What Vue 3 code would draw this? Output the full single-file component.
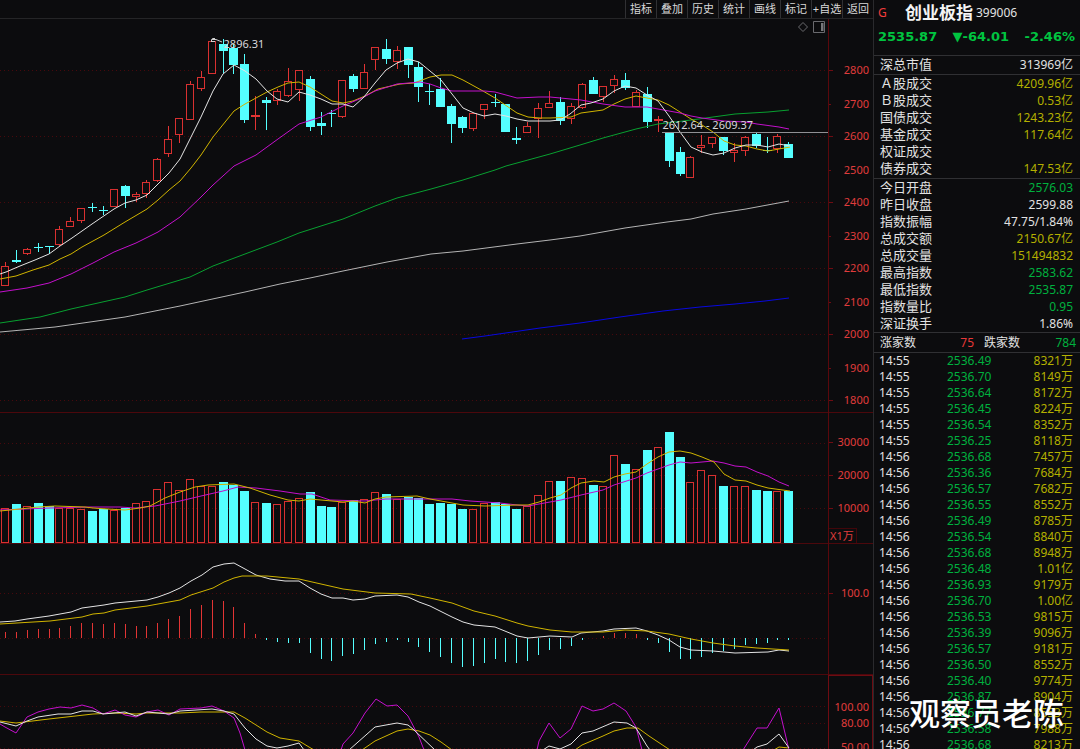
<script setup>
const tools = ['指标', '叠加', '历史', '统计', '画线', '标记', '+自选', '返回']

// kind, high, body top, body bottom, low
const candles = [
  ['r', 262, 266, 286, 286], ['c', 250, 260, 262, 263], ['r', 248, 249, 254, 255], ['c', 243, 247, 248, 252],
  ['c', 246, 246, 247, 254], ['r', 226, 229, 245, 246], ['r', 217, 221, 227, 227], ['r', 208, 208, 221, 223],
  ['c', 203, 207, 208, 212], ['c', 206, 210, 211, 215], ['r', 189, 189, 207, 207], ['c', 185, 186, 196, 208],
  ['r', 192, 194, 197, 202], ['r', 180, 182, 194, 198], ['r', 158, 159, 181, 182], ['r', 126, 139, 154, 157],
  ['r', 118, 118, 135, 143], ['r', 81, 84, 120, 120], ['r', 71, 77, 89, 91], ['r', 41, 41, 74, 74],
  ['c', 39, 44, 51, 73], ['c', 44, 48, 65, 74], ['c', 54, 64, 120, 123], ['r', 96, 115, 117, 130],
  ['c', 97, 100, 103, 130], ['r', 89, 91, 101, 105], ['r', 68, 81, 96, 97], ['r', 70, 70, 90, 101],
  ['c', 76, 79, 127, 131], ['c', 112, 123, 126, 135], ['c', 110, 113, 114, 127], ['r', 80, 80, 117, 118],
  ['c', 74, 76, 89, 92], ['r', 64, 72, 89, 89], ['r', 47, 47, 60, 70], ['c', 39, 49, 59, 64],
  ['r', 46, 50, 62, 69], ['c', 47, 47, 65, 78], ['c', 62, 67, 87, 102], ['c', 84, 91, 92, 105],
  ['c', 78, 89, 107, 107], ['c', 104, 106, 124, 143], ['c', 116, 117, 128, 133], ['r', 113, 113, 129, 131],
  ['r', 104, 104, 110, 119], ['c', 94, 102, 103, 107], ['c', 104, 104, 132, 132], ['c', 127, 138, 140, 144],
  ['r', 122, 126, 133, 133], ['r', 103, 108, 119, 138], ['r', 91, 103, 108, 108], ['c', 97, 102, 121, 125],
  ['r', 103, 106, 119, 124], ['r', 83, 84, 108, 109], ['c', 77, 80, 94, 94], ['r', 86, 86, 97, 102],
  ['r', 75, 79, 86, 93], ['c', 73, 80, 88, 90], ['r', 90, 92, 107, 107], ['c', 87, 94, 122, 128],
  ['r', 116, 119, 121, 132], ['c', 132, 132, 161, 167], ['c', 147, 152, 174, 176], ['r', 156, 157, 178, 178],
  ['r', 135, 145, 148, 153], ['r', 137, 137, 144, 148], ['c', 137, 137, 151, 155], ['r', 143, 150, 153, 162],
  ['r', 136, 137, 151, 156], ['c', 133, 134, 146, 148], ['c', 137, 150, 151, 153], ['r', 134, 136, 149, 153],
  ['c', 142, 144, 158, 158]
].map(([kind, hi, top, bot, lo], i) => ({ kind, hi, top, bot, lo, x: Math.round(i * 10.88) + 5 }))

const volumes = [
  508, 504, 506, 503, 506, 508, 508, 509, 511, 509, 510, 508, 503, 501, 489, 482, 490, 479, 486, 486,
  482, 485, 491, 502, 503, 504, 501, 498, 492, 506, 507, 502, 500, 499, 492, 494, 499, 497, 498, 504,
  503, 504, 509, 509, 503, 502, 504, 509, 506, 495, 481, 481, 477, 478, 485, 486, 455, 464, 469, 450,
  447, 432, 457, 482, 470, 475, 486, 486, 486, 490, 491, 491, 491
]

const macd = [
  632, 632, 630, 629, 629, 628, 626, 623, 623, 624, 623, 624, 626, 626, 623, 619, 616, 609, 605, 600,
  601, 607, 623, 634, 640, 642, 643, 643, 653, 659, 661, 656, 654, 650, 644, 642, 640, 642, 647, 652,
  657, 663, 667, 666, 663, 659, 662, 663, 661, 655, 650, 649, 646, 640, 638, 636, 633, 633, 634, 640,
  643, 652, 659, 659, 657, 653, 651, 649, 645, 644, 643, 640, 640
]

const priceLines = [
  { cls: 'blue', points: '462,339 485,336 540,328 580,323 620,317 663,311 700,307 735,304 765,301 789,298' },
  { cls: 'grey', points: '0,332 55,327 125,317 180,306 245,292 280,284 310,278 343,271 387,262 431,254 463,251 517,244 550,240 580,236 625,228 667,222 691,219 713,214 746,209 789,201' },
  { cls: 'green', points: '0,323 40,317 71,309 125,297 147,290 190,277 213,266 245,254 277,242 299,233 343,219 375,206 397,198 431,189 463,180 495,170 506,166 517,163 550,154 580,145 603,138 636,129 658,124 691,120 713,117 735,114 768,112 789,110' },
  { cls: 'gold', points: '0,279 16,276 33,270 49,265 60,259 71,254 82,247 104,235 125,222 147,209 158,200 169,190 180,181 191,168 201,155 213,137 234,111 245,104 256,98 267,92 278,87 288,83 299,82 310,87 321,94 332,101 343,103 353,101 365,96 378,89 400,84 414,83 430,77 441,75 452,75 463,80 483,91 495,98 517,113 528,117 540,118 550,118 571,117 581,113 603,110 614,104 625,99 636,96 647,98 658,100 669,105 680,112 691,119 702,125 713,132 724,141 735,145 746,146 757,149 768,151 779,149 790,147' },
  { cls: 'purple', points: '0,292 27,288 49,283 71,274 93,263 114,252 136,243 158,232 180,217 201,197 213,185 234,166 256,155 278,139 299,124 321,117 343,106 364,97 375,91 397,84 420,82 430,84 441,88 452,91 485,91 495,92 517,98 539,97 550,97 581,100 603,104 625,107 647,107 658,109 669,111 680,113 691,116 702,118 724,121 746,122 757,124 779,127 789,129' },
  { cls: 'white', points: '0,274 6,272 20,266 35,260 49,254 60,246 72,238 92,224 114,209 125,203 136,200 147,195 158,184 169,173 180,159 191,137 201,117 213,91 223,74 234,65 245,71 256,79 267,91 277,99 288,102 299,92 310,95 321,99 332,104 343,104 353,107 364,97 375,83 386,70 397,63 408,59 419,62 430,71 441,80 452,94 463,108 474,113 484,116 495,114 506,116 517,119 528,121 539,121 550,121 560,120 570,114 581,105 591,103 603,99 614,91 625,86 636,88 647,95 658,101 669,116 680,132 691,147 702,152 713,155 724,153 735,148 746,145 757,145 768,147 779,144 790,146' }
]

const volumeLines = [
  { cls: 'purple', points: '0,510 50,508 90,507 120,507 135,508 155,506 180,501 201,496 223,491 238,487 256,488 280,491 300,494 312,494 330,500 365,501 375,500 386,499 440,499 452,499 470,501 500,503 517,505 528,506 539,504 561,500 581,495 603,490 614,485 636,478 647,473 669,465 680,462 691,463 713,461 724,463 735,466 746,467 757,472 768,476 779,482 789,486' },
  { cls: 'gold', points: '0,511 20,509 38,507 55,506 85,507 93,508 107,509 125,510 140,508 150,506 165,498 180,492 195,487 208,485 234,484 250,488 270,495 288,500 299,501 310,499 343,502 353,501 365,503 375,499 386,497 417,496 430,499 452,503 463,505 485,506 517,505 528,505 539,502 550,498 561,495 571,488 581,483 594,481 604,482 614,477 625,474 636,472 647,464 658,457 669,452 680,451 691,453 702,457 714,462 724,474 735,480 746,481 757,485 768,488 790,491' }
]

const macdLines = [
  { cls: 'white', points: '0,622 15,621 27,619 49,616 71,612 82,608 104,605 115,603 147,600 158,597 169,593 180,588 191,581 202,575 213,567 224,564 234,563 245,569 256,575 270,579 285,581 299,581 310,588 321,594 332,598 343,598 353,600 365,599 375,596 397,595 408,597 419,602 430,606 452,617 463,622 474,625 495,627 517,636 528,638 550,636 572,637 581,633 603,631 614,629 636,628 647,631 658,635 669,640 680,647 691,650 713,651 735,653 768,652 779,650 789,651' },
  { cls: 'gold', points: '0,624 50,621 82,617 93,614 104,613 115,610 147,606 169,602 180,600 191,595 213,588 224,582 234,578 242,576 267,576 299,579 321,584 343,589 375,593 411,594 430,598 452,603 474,611 495,616 517,623 528,626 550,630 572,632 603,632 625,630 647,631 669,634 691,639 713,643 735,646 757,648 789,650' }
]

const kdjLines = [
  { cls: 'gold', points: '0,721 16,723 49,719 93,714 115,713 136,714 147,713 180,713 201,712 234,712 245,718 267,732 280,738 299,741 314,750' },
  { cls: 'gold', points: '362,750 375,741 397,731 408,729 419,731 430,735 441,742 452,750' },
  { cls: 'gold', points: '575,750 582,745 603,736 614,731 627,728 638,728 649,736 670,750' },
  { cls: 'gold', points: '774,750 779,747 789,748' },
  { cls: 'purple', points: '0,724 5,727 16,733 27,717 38,712 49,709 60,707 71,708 82,705 93,708 103,714 115,710 125,715 136,717 147,712 158,710 169,715 180,709 201,708 212,706 224,711 234,718 240,733 245,750' },
  { cls: 'purple', points: '341,750 343,744 353,733 365,713 376,699 387,706 397,705 408,716 419,737 424,750' },
  { cls: 'purple', points: '537,750 539,741 549,723 560,738 571,729 582,706 593,711 603,709 614,703 626,711 636,727 642,750' },
  { cls: 'purple', points: '743,750 757,728 767,728 779,708 789,750' },
  { cls: 'white', points: '0,722 16,726 27,721 38,717 58,714 71,714 82,711 93,711 103,714 125,712 136,716 147,712 169,714 180,711 212,709 224,711 234,714 245,728 256,739 267,746 277,748 288,746 299,743 304,750' },
  { cls: 'white', points: '349,750 375,727 397,723 408,725 414,730 435,750' },
  { cls: 'white', points: '543,750 549,746 560,749 571,744 582,733 593,731 614,722 627,723 636,728 647,746 650,750' },
  { cls: 'white', points: '753,750 757,747 767,744 779,734 789,748' }
]

const panes = [
  {
    id: 'price', top: 19, height: 394, grid: [70, 136, 202, 268, 334, 400], lines: priceLines,
    labels: [['2800', 70], ['2700', 104], ['2600', 136], ['2500', 170], ['2400', 202], ['2300', 236], ['2200', 268], ['2100', 302], ['2000', 334], ['1900', 368], ['1800', 400]]
  },
  { id: 'volume', top: 413, height: 131, grid: [443, 475, 508], lines: volumeLines, labels: [['30000', 442], ['20000', 475], ['10000', 508]] },
  { id: 'macd', top: 544, height: 131, grid: [593, 638], lines: macdLines, labels: [['100.0', 593]] },
  { id: 'kdj', top: 675, height: 74, grid: [706, 723, 748], lines: kdjLines, labels: [['100.00', 706], ['80.00', 723], ['50.00', 747]] }
]
const pct = (y, pane) => `${((y - pane.top) / pane.height) * 100}%`

const turnover = [
  ['Ａ股成交', '4209.96亿'], ['Ｂ股成交', '0.53亿'], ['国债成交', '1243.23亿'],
  ['基金成交', '117.64亿'], ['权证成交', ''], ['债券成交', '147.53亿']
]
const stats = [
  ['今日开盘', '2576.03', 'down'], ['昨日收盘', '2599.88', 'plain'], ['指数振幅', '47.75/1.84%', 'plain'],
  ['总成交额', '2150.67亿', 'amount'], ['总成交量', '151494832', 'amount'], ['最高指数', '2583.62', 'down'],
  ['最低指数', '2535.87', 'down'], ['指数量比', '0.95', 'down'], ['深证换手', '1.86%', 'plain']
]
const ticks = [
  ['14:55', '2536.49', '8321万'], ['14:55', '2536.70', '8149万'], ['14:55', '2536.64', '8172万'],
  ['14:55', '2536.45', '8224万'], ['14:55', '2536.54', '8352万'], ['14:55', '2536.25', '8118万'],
  ['14:56', '2536.68', '7457万'], ['14:56', '2536.36', '7684万'], ['14:56', '2536.57', '7682万'],
  ['14:56', '2536.55', '8552万'], ['14:56', '2536.49', '8785万'], ['14:56', '2536.54', '8840万'],
  ['14:56', '2536.68', '8948万'], ['14:56', '2536.48', '1.01亿'], ['14:56', '2536.93', '9179万'],
  ['14:56', '2536.70', '1.00亿'], ['14:56', '2536.53', '9815万'], ['14:56', '2536.39', '9096万'],
  ['14:56', '2536.57', '9181万'], ['14:56', '2536.50', '8552万'], ['14:56', '2536.40', '9774万'],
  ['14:56', '2536.87', '8904万'], ['14:56', '2536.77', '8553万'], ['14:56', '2536.58', '7988万'],
  ['14:56', '2536.68', '8213万']
]
</script>

<template>
  <div class="terminal">
    <main class="charts">
      <nav class="toolbar">
        <button v-for="t in tools" :key="t" type="button">{{ t }}</button>
      </nav>
      <div class="panes">
        <section v-for="p in panes" :key="p.id" class="pane" :class="p.id">
          <div class="plot">
            <svg :viewBox="`0 ${p.top} 828 ${p.height}`" preserveAspectRatio="none">
              <line v-for="y in p.grid" :key="y" class="grid" x1="0" x2="828" :y1="y + 0.5" :y2="y + 0.5" />
              <g v-if="p.id === 'price'" shape-rendering="crispEdges">
                <g v-for="(c, i) in candles" :key="i" :class="c.kind">
                  <rect class="fill" :x="c.x" :y="c.hi" width="1" :height="c.top - c.hi" />
                  <rect class="fill" :x="c.x" :y="c.bot" width="1" :height="c.lo - c.bot" />
                  <rect v-if="c.kind === 'c' || c.bot - c.top < 3" class="fill" :x="c.x - 4" :y="c.top" width="9" :height="c.bot - c.top" />
                  <rect v-else class="hollow" :x="c.x - 3.5" :y="c.top + 0.5" width="7" :height="c.bot - c.top - 1" />
                </g>
              </g>
              <g v-if="p.id === 'volume'" shape-rendering="crispEdges">
                <g v-for="(y, i) in volumes" :key="i" :class="candles[i].kind">
                  <rect v-if="candles[i].kind === 'c'" class="fill" :x="candles[i].x - 4" :y="y" width="9" :height="543 - y" />
                  <rect v-else class="hollow" :x="candles[i].x - 3.5" :y="y + 0.5" width="7" :height="542 - y" />
                </g>
              </g>
              <g v-if="p.id === 'macd'" shape-rendering="crispEdges">
                <g v-for="(y, i) in macd" :key="i" :class="y < 638 ? 'r' : 'c'">
                  <rect class="fill" :x="candles[i].x" :y="Math.min(y, 638)" width="1" :height="Math.abs(638 - y)" />
                </g>
              </g>
              <polyline v-for="(l, i) in p.lines" :key="i" class="curve" :class="l.cls" :points="l.points" />
              <template v-if="p.id === 'price'">
                <line class="gap-line" x1="662" x2="828" y1="132.5" y2="132.5" />
                <path class="marker" d="M215 38.5h-2.5l-1 1v2.500M212 39.500h4l6 2.500M212 41.500h3" />
              </template>
            </svg>
            <template v-if="p.id === 'price'">
              <span class="note peak">2896.31</span>
              <span class="note gap">2612.64 - 2609.37</span>
              <svg class="view-icons" viewBox="0 0 28 14">
                <path d="M5 2.500L9.500 7 5 11.500.500 7z" />
                <path d="M15.500 1.500h11v11h-11z" />
                <path class="bar" d="M23 3h2.500v8H23z" />
              </svg>
            </template>
          </div>
          <div class="axis">
            <span v-for="[text, y] in p.labels" :key="text" class="label" :style="{ top: pct(y, p) }">{{ text }}</span>
            <template v-if="p.id !== 'kdj'">
              <span v-for="[text, y] in p.labels" :key="`t${text}`" class="tick" :class="{ short: p.id === 'price' && Number(text) % 200 }" :style="{ top: pct(y, p) }"></span>
            </template>
            <span v-if="p.id === 'volume'" class="unit">X1万</span>
          </div>
        </section>
      </div>
    </main>

    <aside class="quote">
      <header class="head">
        <span class="flag">G</span>
        <h1>创业板指</h1>
        <span class="code">399006</span>
      </header>
      <div class="price-row">
        <span>2535.87</span>
        <span class="change">▼-64.01</span>
        <span class="percent">-2.46%</span>
      </div>
      <table class="facts cap">
        <tbody><tr><th scope="row">深总市值</th><td class="plain">313969亿</td></tr></tbody>
      </table>
      <table class="facts turnover">
        <tbody>
          <tr v-for="[k, v] in turnover" :key="k"><th scope="row">{{ k }}</th><td class="amount">{{ v }}</td></tr>
        </tbody>
      </table>
      <table class="facts stats">
        <tbody>
          <tr v-for="[k, v, c] in stats" :key="k"><th scope="row">{{ k }}</th><td :class="c">{{ v }}</td></tr>
        </tbody>
      </table>
      <div class="breadth">
        <span>涨家数</span><span class="num up">75</span>
        <span class="falling">跌家数</span><span class="num down">784</span>
      </div>
      <div class="ticks">
        <table>
          <tbody>
            <tr v-for="([t, pr, v], i) in ticks" :key="i">
              <td class="plain">{{ t }}</td><td class="down">{{ pr }}</td><td class="amount">{{ v }}</td>
            </tr>
          </tbody>
        </table>
      </div>
      <div class="watermark">观察员老陈</div>
    </aside>
  </div>
</template>

<style>
html, body { background: #0c0c0e; }
</style>

<style scoped>
.terminal {
  display: grid;
  grid-template-columns: minmax(0, 1fr) 207px;
  height: 100vh;
  overflow: hidden;
  background: #0c0c0e;
  color: #e2e2e2;
  font-family: "Noto Sans", "Noto Sans CJK SC", sans-serif;
  font-size: 12px;
}
.charts { display: flex; flex-direction: column; min-width: 0; min-height: 0; }
.toolbar {
  display: flex;
  justify-content: flex-end;
  height: 18px;
  border-bottom: 1px solid #252527;
}
.toolbar button {
  width: 31px;
  padding: 0;
  border: 0;
  border-left: 1px solid #303033;
  background: none;
  color: #d8d8d8;
  font: 11px/16px "Noto Sans", "Noto Sans CJK SC", sans-serif;
  white-space: nowrap;
}
.panes {
  flex: 1;
  min-height: 0;
  display: grid;
  grid-template-rows: 394fr 131fr 131fr 74fr;
}
.pane {
  display: grid;
  grid-template-columns: minmax(0, 1fr) 45px;
  min-height: 0;
}
.plot { position: relative; min-height: 0; }
.plot > svg:first-child { position: absolute; width: 100%; height: 100%; }
.axis {
  position: relative;
  min-height: 0;
  border-left: 1px solid #5a080c;
  color: #e03c3c;
  font-size: 11px;
  line-height: 14px;
}
.volume, .macd, .kdj { box-shadow: 0 -1px #4c080c; }
.kdj .axis { border: 1px solid #6e0c12; border-bottom: 0; }
.label { position: absolute; right: 4px; transform: translateY(-50%); }
.kdj .label { right: 3px; }
.tick { position: absolute; left: 0; width: 4px; height: 1px; background: #6e0c12; }
.tick.short { width: 2px; }
.unit {
  position: absolute;
  left: 0;
  bottom: 1px;
  padding: 0 2px 0 1px;
  border: 1px solid #42060a;
  border-left: 0;
  border-bottom: 0;
}
.grid { stroke: #48090d; stroke-dasharray: 1 3; }
.r .fill { fill: #e23434; }
.c .fill { fill: #54ffff; }
.hollow { fill: none; stroke: #d83030; }
.curve { fill: none; stroke-width: 1; }
.curve.white { stroke: #e4e4e4; }
.curve.grey { stroke: #b4b4b4; }
.curve.gold { stroke: #d0b400; }
.curve.purple { stroke: #c410cc; }
.curve.green { stroke: #08a030; }
.curve.blue { stroke: #0808e0; }
.gap-line { stroke: #909094; }
.marker { fill: none; stroke: #d0d0d0; }
.note { position: absolute; font-size: 11px; line-height: 14px; color: #d8d8dc; white-space: nowrap; }
.peak { left: 27%; top: 4.6%; }
.gap { left: 80%; top: 25%; }
.view-icons { position: absolute; right: 2px; top: 1px; width: 28px; height: 14px; }
.view-icons path { fill: none; stroke: #6a6a6e; }
.view-icons .bar { fill: #77777a; stroke: none; }

.quote {
  position: relative;
  display: flex;
  flex-direction: column;
  min-height: 0;
  border-left: 1px solid #2a2a2d;
  box-sizing: border-box;
}
.head { display: flex; align-items: center; height: 25px; padding-left: 4px; }
.flag { width: 27px; color: #f03c3c; font-size: 12px; }
h1 { margin: 0; color: #f4f4f4; font-size: 17px; line-height: 24px; }
.code { padding-left: 3px; }
.price-row {
  display: flex;
  justify-content: space-between;
  padding: 0 5px 0 4px;
  height: 30px;
  color: #00c440;
  font: bold 13px/24px "DejaVu Sans", sans-serif;
  border-bottom: 1px solid #303033;
}
table { border-collapse: collapse; }
th, td { padding: 0; }
.facts { width: 100%; border-bottom: 1px solid #303033; border-collapse: separate; border-spacing: 0; }
.facts th { padding-left: 6px; text-align: left; font-weight: 400; font-size: 13px; line-height: 17px; }
.facts td { padding-right: 7px; text-align: right; line-height: 17px; }
.cap { padding-bottom: 1px; }
.turnover { padding-bottom: 1px; }
.plain { color: #e2e2e2; }
.amount { color: #b4b000; }
.down { color: #00b03e; }
.up { color: #e83838; }
.breadth {
  display: grid;
  grid-template-columns: 43px 51px 48px 1fr;
  padding: 0 4px 0 6px;
  height: 19px;
  line-height: 19px;
  border-bottom: 1px solid #303033;
}
.num { text-align: right; }
.falling { padding-left: 10px; }
.ticks { flex: 1; min-height: 0; overflow: hidden; }
.ticks table { width: 100%; table-layout: fixed; }
.ticks td { line-height: 16px; }
.ticks td:first-child { width: 73px; padding-left: 5px; box-sizing: border-box; }
.ticks td:last-child { padding-right: 7px; text-align: right; }
.watermark {
  position: absolute;
  right: 16px;
  bottom: 17px;
  color: #fff;
  font: 500 31px/40px "Noto Sans CJK SC", sans-serif;
  white-space: nowrap;
}
</style>
